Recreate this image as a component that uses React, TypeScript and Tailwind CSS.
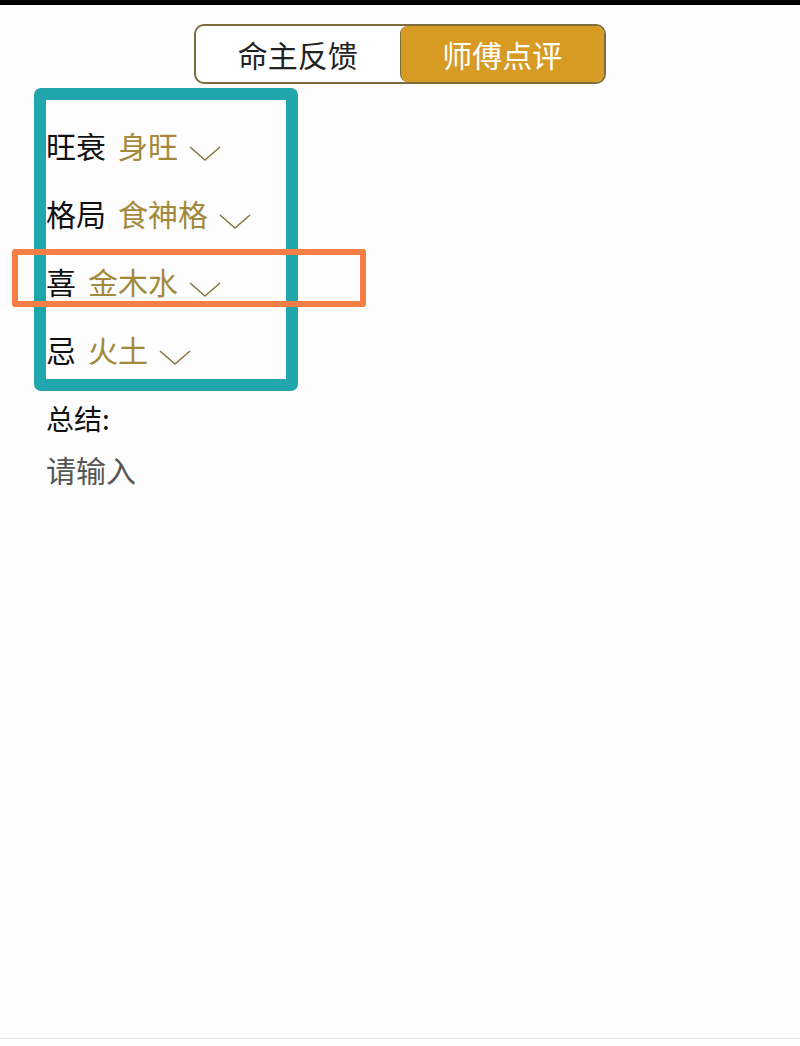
import { useState } from "react";

type Row = { label: string; value: string };

const rows: Row[] = [
  { label: "旺衰", value: "身旺" },
  { label: "格局", value: "食神格" },
  { label: "喜", value: "金木水" },
  { label: "忌", value: "火土" },
];

const font = "font-['Noto_Sans_CJK_SC','Noto_Sans',sans-serif]";

export default function App() {
  const [tab, setTab] = useState<"owner" | "master">("master");

  return (
    <main className={`relative w-[800px] h-[1046px] bg-[#fdfdfd] overflow-hidden ${font}`}>
      <div className="h-[5px] bg-black" />

      <div className="flex justify-center mt-[19px]">
        <div className="flex w-[412px] h-[60px] rounded-[10px] border-2 border-[#7d6c3c] bg-white">
          <button
            onClick={() => setTab("owner")}
            className={`flex-1 flex items-center justify-center text-[30px] leading-none rounded-[8px] ${tab === "owner" ? "bg-[#d79a23] text-white" : "text-[#222]"}`}
          >
            命主反馈
          </button>
          <button
            onClick={() => setTab("master")}
            className={`flex-1 flex items-center justify-center text-[30px] leading-none rounded-[8px] ${tab === "master" ? "bg-[#d79a23] text-white border-l-[1.5px] border-[#7d6c3c]" : "text-[#222]"}`}
          >
            师傅点评
          </button>
        </div>
      </div>

      <div className="pl-[46px] mt-[27px]">
        {rows.map((r) => (
          <div key={r.label} className="flex items-center h-[68px]">
            <span className="text-[30px] leading-none text-[#111]">{r.label}</span>
            <span className="ml-[12px] text-[30px] leading-none text-[#a4893c]">{r.value}</span>
            <svg className="ml-[11px] mt-[18px] w-[32px] h-[16px]" viewBox="0 0 32 16" fill="none" stroke="#8a7842" strokeWidth="1.6">
              <polyline points="1,1 16,14 31,1" />
            </svg>
          </div>
        ))}

        <div className="mt-[17px] text-[28px] leading-none text-[#111] h-[36px] flex items-center">总结:</div>
        <div className="mt-[15px] text-[30px] leading-none text-[#555] h-[36px] flex items-center">请输入</div>
      </div>

      {/* annotation frames */}
      <div className="absolute left-[34px] top-[88px] w-[264px] h-[303px] border-[12px] border-[#22a6ad] rounded-[7px] pointer-events-none" />
      <div className="absolute left-[12px] top-[249px] w-[354px] h-[58px] border-[6px] border-[#f47e46] rounded-[3px] pointer-events-none" />

      <div className="absolute left-0 right-0 top-[1038px] h-px bg-[#e6e6e6]" />
    </main>
  );
}
